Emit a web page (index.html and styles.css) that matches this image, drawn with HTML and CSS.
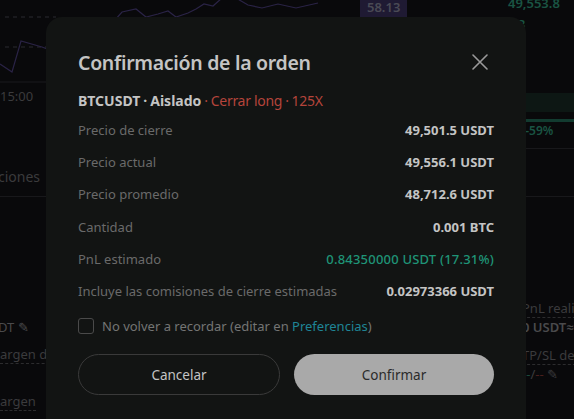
FILE: index.html
```html
<!DOCTYPE html>
<html lang="es">
<head>
    <meta charset="UTF-8">
    <meta name="viewport" content="width=device-width, initial-scale=1.0">
    <title>Confirmación de la orden</title>
    <link rel="stylesheet" href="styles.css">
</head>
<body>
    <!-- fondo: pantalla de trading atenuada -->
    <div class="backdrop">
        <svg class="chart" width="574" height="90" viewBox="0 0 574 90">
            <line x1="5" y1="17" x2="56" y2="17" class="dash"/>
            <line x1="5" y1="47" x2="46" y2="47" class="dash"/>
            <polyline class="price" points="0,64 12,72 21,41 42,47 50,50"/>
            <polyline class="price" points="115,20 122,12 136,9 146,17 158,14 168,11 176,17 188,13 196,9 204,4 213,6 222,-2"/>
            <polyline class="price" points="236,-2 248,5 262,8 278,4 296,8 318,3"/>
            <line x1="0" y1="82" x2="46" y2="82" class="grid"/>
        </svg>
        <span class="bg-text t-time">15:00</span>
        <span class="bg-text t-tab">ciones</span>
        <div class="bg-rule r-left"></div>
        <span class="bg-badge">58.13</span>
        <span class="bg-green t-ask">49,553.8</span>
        <span class="bg-green t-ask2">3</span>
        <div class="bg-hl"></div>
        <div class="bg-bar"></div>
        <span class="bg-green t-pct">r-59%</span>
        <div class="bg-rule r-right1"></div>
        <div class="bg-rule r-right2"></div>
        <span class="bg-text t-dt">DT &#9998;</span>
        <span class="bg-text dotted t-margen1">argen de</span>
        <span class="bg-text dotted t-margen2">argen</span>
        <span class="bg-text dotted t-pnl">PnL realiz</span>
        <span class="bg-text t-usdt">0 USDT&asymp;0</span>
        <span class="bg-text dotted t-tpsl">TP/SL de l</span>
        <span class="bg-text t-dash"><i class="g">--</i>/<i class="r">--</i> &#9998;</span>
    </div>

    <div class="modal">
        <div class="modal-head">
            <h2>Confirmación de la orden</h2>
            <svg class="close" width="16" height="16" viewBox="0 0 16 16">
                <path d="M1 1L15 15M15 1L1 15" stroke="#9a9a9a" stroke-width="1.6" stroke-linecap="round"/>
            </svg>
        </div>

        <div class="symbol">
            <b>BTCUSDT<i class="dot">·</i>Aislado</b><span class="sell"><i class="dot">·</i>Cerrar long<i class="dot">·</i>125X</span>
        </div>

        <div class="rows">
            <div class="row"><span>Precio de cierre</span><b>49,501.5 USDT</b></div>
            <div class="row"><span>Precio actual</span><b>49,556.1 USDT</b></div>
            <div class="row"><span>Precio promedio</span><b>48,712.6 USDT</b></div>
            <div class="row"><span>Cantidad</span><b>0.001 BTC</b></div>
            <div class="row"><span>PnL estimado</span><b class="up">0.84350000 USDT (17.31%)</b></div>
            <div class="row"><span>Incluye las comisiones de cierre estimadas</span><b>0.02973366 USDT</b></div>
        </div>

        <label class="remember">
            <span class="box"></span>
            <span>No volver a recordar (editar en <a href="#">Preferencias</a>)</span>
        </label>

        <div class="buttons">
            <button class="btn btn-cancel">Cancelar</button>
            <button class="btn btn-confirm">Confirmar</button>
        </div>
    </div>
</body>
</html>
```

FILE: styles.css
```css
* {
    margin: 0;
    padding: 0;
    box-sizing: border-box;
}

body {
    font-family: 'Noto Sans', 'Open Sans', sans-serif;
    background-color: #09090b;
    width: 574px;
    height: 419px;
    overflow: hidden;
    position: relative;
}

/* fondo */
.backdrop {
    position: absolute;
    inset: 0;
}

.chart {
    position: absolute;
    left: 0;
    top: 0;
}

.chart .dash {
    stroke: #2a2a30;
    stroke-dasharray: 4 4;
}

.chart .grid {
    stroke: #1a1a1e;
}

.chart .price {
    fill: none;
    stroke: #2a2346;
    stroke-width: 1.2;
}

.bg-text {
    position: absolute;
    font-size: 13px;
    color: #3b3b3d;
    white-space: nowrap;
}

.bg-text.dotted {
    border-bottom: 1px dashed #2c2c2e;
    line-height: 17px;
}

.bg-text i {
    font-style: normal;
}

.bg-text .g { color: #1b4a3c; }
.bg-text .r { color: #4a1f1d; }

.t-time { left: 0; top: 87px; }
.t-tab { left: -2px; top: 167px; font-size: 14px; }
.t-dt { left: -2px; top: 318px; color: #4a4a4c; }
.t-margen1 { left: 0; top: 346px; }
.t-margen2 { left: 0; top: 393px; }
.t-pnl { left: 522px; top: 300px; }
.t-usdt { left: 522px; top: 318px; color: #4a4a4c; font-weight: 600; }
.t-tpsl { left: 522px; top: 347px; }
.t-dash { left: 522px; top: 365px; }

.bg-rule {
    position: absolute;
    height: 1px;
    background: #18181b;
}

.r-left { left: 0; width: 50px; top: 196px; }
.r-right1 { left: 520px; width: 54px; top: 148px; }
.r-right2 { left: 520px; width: 54px; top: 196px; }

.bg-badge {
    position: absolute;
    left: 360px;
    top: -4px;
    padding: 2px 7px;
    background: #1f1a33;
    color: #4a4a55;
    font-size: 13px;
    font-weight: 600;
}

.bg-green {
    position: absolute;
    color: #1a5443;
    font-size: 13px;
    font-weight: 600;
}

.t-ask { left: 508px; top: -6px; }
.t-ask2 { left: 518px; top: 15px; }
.t-pct { left: 520px; top: 122px; font-size: 12px; }

.bg-hl {
    position: absolute;
    left: 520px;
    top: 93px;
    width: 54px;
    height: 19px;
    background: #0d1714;
}

.bg-bar {
    position: absolute;
    left: 520px;
    top: 119px;
    width: 54px;
    height: 3px;
    background: #123b30;
}

/* ventana */
.modal {
    position: absolute;
    left: 46px;
    top: 17px;
    width: 480px;
    height: 420px;
    background: #121413;
    border-radius: 16px;
    padding: 30px 32px 0;
}

.modal-head {
    display: flex;
    justify-content: space-between;
    align-items: center;
    height: 30px;
}

.modal-head h2 {
    font-size: 19.5px;
    font-weight: 600;
    color: #c4c4c4;
    letter-spacing: -0.3px;
}

.close {
    margin-right: 6px;
}

.symbol {
    margin-top: 14px;
    font-size: 14px;
    line-height: 20px;
    color: #c4c4c4;
}

.symbol b {
    font-weight: 700;
}

.symbol .dot {
    font-style: normal;
    margin: 0 3px;
}

.symbol .sell {
    color: #b5443b;
    letter-spacing: -0.3px;
}

.rows {
    margin-top: 3px;
}

.row {
    display: flex;
    justify-content: space-between;
    align-items: center;
    height: 32.2px;
    font-size: 13px;
}

.row span {
    color: #6a6a6a;
}

.row b {
    font-weight: 700;
    color: #c4c4c4;
}

.row b.up {
    color: #1f9477;
    font-weight: 500;
    letter-spacing: 0.2px;
}

.remember {
    display: flex;
    align-items: center;
    gap: 8px;
    margin-top: 11px;
    height: 16px;
    font-size: 13px;
    color: #747474;
}

.remember .box {
    width: 16px;
    height: 16px;
    border: 1px solid #4a4a4a;
    border-radius: 3px;
}

.remember a {
    color: #1f8596;
    text-decoration: none;
}

.buttons {
    display: flex;
    gap: 14px;
    margin-top: 20px;
}

.btn {
    flex: 1;
    height: 41px;
    border-radius: 21px;
    font-family: inherit;
    font-size: 13.5px;
    cursor: pointer;
}

.btn-cancel {
    background: transparent;
    border: 1px solid #3a3a3a;
    color: #c4c4c4;
}

.btn-confirm {
    background: #a9a9a9;
    border: none;
    color: #2b2b2b;
}
```
